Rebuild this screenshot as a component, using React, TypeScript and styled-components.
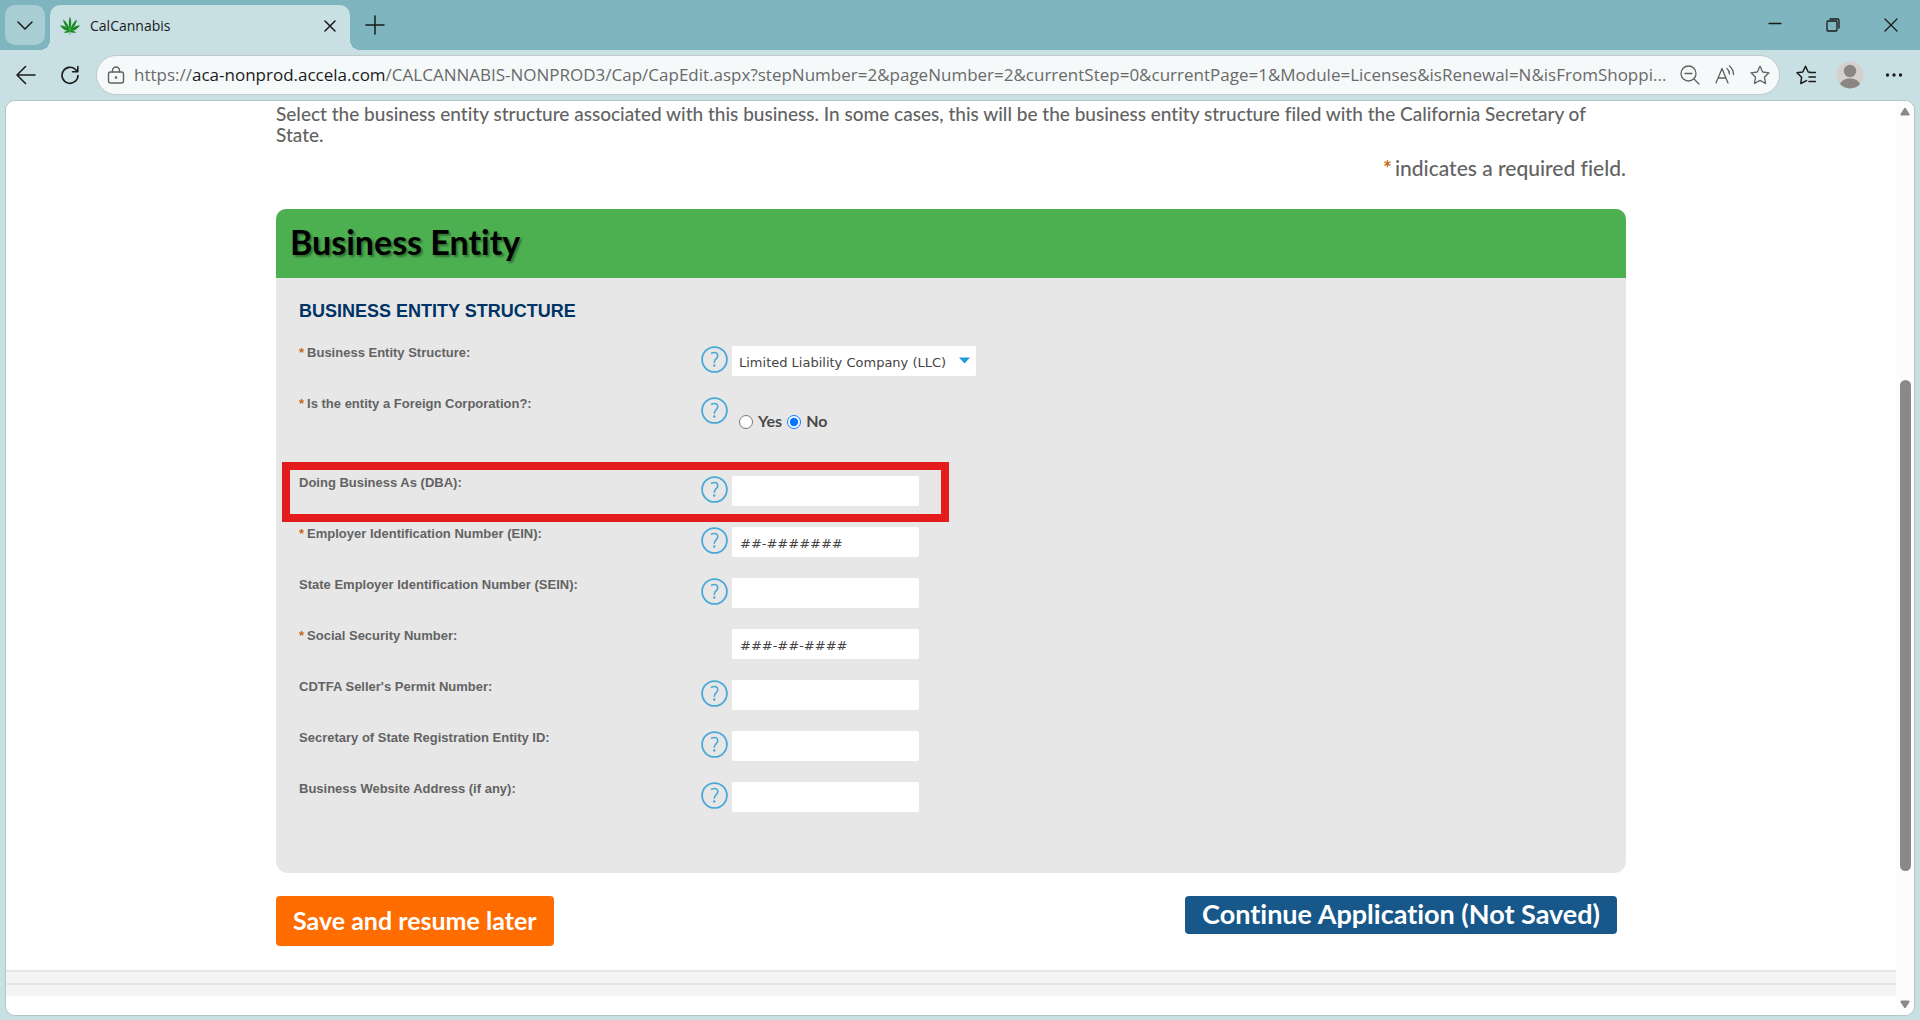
import React, { useState } from "react";
import styled, { createGlobalStyle, css } from "styled-components";

const sans = `Lato, "Open Sans", sans-serif`;
const ui = `"Open Sans", "Noto Sans", sans-serif`;
const arial = `"Liberation Sans", Arial, sans-serif`;
const verdana = `"DejaVu Sans", Verdana, sans-serif`;

const GlobalStyle = createGlobalStyle`
  *, *::before, *::after { box-sizing: border-box; }
  body { margin: 0; font-family: ${sans}; font-variant-ligatures: none; color: #636363; }
  button, input, select { font: inherit; font-variant-ligatures: inherit; color: inherit; }
`;

/* ---------- Browser frame ---------- */

const Window = styled.div`
  display: flex;
  flex-direction: column;
  height: 100vh;
  overflow: hidden;
  background: #c8dfe3;
`;

const TabStrip = styled.header`
  display: flex;
  align-items: flex-start;
  height: 50px;
  padding-left: 5px;
  background: #7eb5be;
  flex: none;
`;

const IconButton = styled.button<{ $w?: number; $h?: number }>`
  display: flex;
  align-items: center;
  justify-content: center;
  flex: none;
  width: ${(p) => p.$w ?? 44}px;
  height: ${(p) => p.$h ?? 38}px;
  padding: 0;
  border: 0;
  background: none;
  color: #1b1b1b;
`;

const TabMenuButton = styled(IconButton)`
  margin: 5px 5px 0 0;
  border-radius: 10px;
  background: #a8ced4;
`;

const Tab = styled.div`
  position: relative;
  display: flex;
  align-items: center;
  align-self: flex-end;
  width: 300px;
  height: 45px;
  padding: 0 4px 4px 8px;
  border-radius: 10px 10px 0 0;
  background: #c8dfe3;
  font-family: ${ui};
  font-size: 14px;
  color: #1b1b1b;

  &::before,
  &::after {
    content: "";
    position: absolute;
    bottom: 0;
    width: 10px;
    height: 10px;
  }
  &::before {
    left: -10px;
    background: radial-gradient(circle at 0 0, transparent 10px, #c8dfe3 10px);
  }
  &::after {
    right: -10px;
    background: radial-gradient(circle at 100% 0, transparent 10px, #c8dfe3 10px);
  }
`;

const TabTitle = styled.span`
  flex: 1;
  padding-left: 8px;
`;

const WindowControls = styled.div`
  display: flex;
  margin-left: auto;
`;

const Toolbar = styled.nav`
  display: flex;
  align-items: center;
  height: 50px;
  padding: 0 4px;
  flex: none;
`;

const AddressBar = styled.div`
  display: flex;
  align-items: center;
  flex: 1;
  min-width: 0;
  height: 40px;
  margin: 0 4px;
  padding-right: 2px;
  border: 1px solid #c0caca;
  border-radius: 20px;
  background: #f5f9fa;

  ${IconButton} { color: #616161; }
`;

const Url = styled.div`
  flex: 1;
  min-width: 0;
  overflow: hidden;
  white-space: nowrap;
  font-family: ${ui};
  font-size: 17px;
  line-height: 26px;
  color: #6a6a68;
  outline: none;
`;

const Host = styled.span`
  color: #1b1b1b;
`;

/* ---------- Page ---------- */

const Page = styled.div`
  display: flex;
  flex: 1;
  min-height: 0;
  margin: 0 5px 4px;
  border: 1px solid #b3c5c9;
  border-radius: 10px;
  overflow: hidden;
  background: #fff;
`;

const Viewport = styled.main`
  flex: 1;
  min-width: 0;
  overflow: hidden;
`;

const Content = styled.div`
  max-width: 1350px;
  margin: 0 auto;
`;

const Intro = styled.p`
  margin: 0;
  padding: 2px 20px 0 0;
  font-size: 19px;
  font-weight: 500;
  line-height: 21px;
`;

const RequiredNote = styled.p`
  margin: 11px 0 29px;
  font-size: 21px;
  font-weight: 500;
  line-height: 24px;
  text-align: right;
`;

const Star = styled.span`
  margin-right: 3px;
  color: #c76a14;
  font-weight: 700;
`;

const Panel = styled.section`
  border-radius: 10px 10px 12px 12px;
  overflow: hidden;
  background: #e7e7e7;
`;

const PanelTitle = styled.h1`
  margin: 0;
  padding: 13px 14px 16px;
  background: #4caf50;
  color: #000;
  font-size: 34px;
  font-weight: 700;
  line-height: 40px;
  text-shadow: 2px 2px 2px rgba(0, 0, 0, 0.35);
`;

const PanelBody = styled.form`
  padding: 22px 23px 42px;
`;

const SectionTitle = styled.h2`
  margin: 0 0 22px;
  font-family: ${arial};
  font-size: 18px;
  line-height: 22px;
  color: #003366;
`;

const Row = styled.div<{ $tall?: boolean }>`
  position: relative;
  display: grid;
  grid-template-columns: 402px 31px 1fr;
  align-items: start;
  height: ${(p) => (p.$tall ? 79 : 51)}px;
`;

const Highlight = styled.div`
  position: absolute;
  top: -12px;
  left: -17px;
  width: 667px;
  height: 60px;
  border: 8px solid #e51c1e;
  pointer-events: none;
`;

const labelText = css`
  font-family: ${arial};
  font-size: 13px;
  font-weight: 700;
  line-height: 18px;
`;

const Label = styled.label`
  ${labelText}
`;

const LabelText = styled.span`
  ${labelText}
`;

const HelpButton = styled.button`
  display: block;
  grid-column: 2;
  width: 27px;
  height: 27px;
  margin-top: 2px;
  padding: 0;
  border: 0;
  background: none;
  color: #4ba9d8;
`;

const fieldBox = css`
  grid-column: 3;
  height: 30px;
  margin-top: 2px;
  border: 0;
  border-radius: 2px;
  background: #fff;
  font-family: ${verdana};
  font-size: 13px;
  color: #444;
`;

const TextInput = styled.input`
  ${fieldBox}
  width: 187px;
  padding: 2px 8px 0;
  &::placeholder { color: #444; opacity: 1; }
`;

const SelectWrap = styled.div`
  ${fieldBox}
  position: relative;
  width: 244px;
`;

const Select = styled.select`
  appearance: none;
  width: 100%;
  height: 100%;
  padding: 2px 18px 0 7px;
  border: 0;
  background: transparent;
`;

const Caret = styled.svg`
  position: absolute;
  top: 11px;
  right: 6px;
  pointer-events: none;
`;

const Choices = styled.fieldset`
  display: flex;
  align-items: center;
  grid-column: 3;
  margin: 16px 0 0;
  padding: 0 0 0 7px;
  border: 0;
`;

const Choice = styled.label`
  display: flex;
  align-items: center;
  margin-right: 5px;
  font-size: 16px;
  font-weight: 700;
  line-height: 20px;
  color: #4a4a4a;
`;

const Radio = styled.input`
  width: 14px;
  height: 14px;
  margin: 1px 5px 0 0;
  accent-color: #0a75ff;
`;

const Actions = styled.div`
  display: flex;
  align-items: flex-start;
  justify-content: space-between;
  padding: 23px 9px 24px 0;
`;

const ActionButton = styled.button<{ $primary?: boolean }>`
  height: ${(p) => (p.$primary ? 38 : 50)}px;
  padding: 0 17px 2px;
  border: 0;
  border-radius: 4px;
  background: ${(p) => (p.$primary ? "#17578a" : "#ff6c00")};
  color: #fff;
  font-size: ${(p) => (p.$primary ? 27 : 25)}px;
  font-weight: 700;
  line-height: 30px;
  white-space: nowrap;
`;

const Footer = styled.footer`
  border-top: 2px solid #e6e6e6;
  background: #f4f4f4;
`;

const FooterBand = styled.div`
  height: 11px;
  &:first-child { height: 13px; border-bottom: 2px solid #e6e6e6; }
`;

const ScrollTrack = styled.div`
  display: flex;
  flex-direction: column;
  align-items: center;
  flex: none;
  width: 18px;
  padding: 6px 0;
  background: #fcfcfc;
`;

const ScrollRail = styled.div`
  flex: 1;
  width: 11px;
  padding: 264px 0 129px;
`;

const ScrollThumb = styled.div`
  height: 100%;
  border-radius: 6px;
  background: #898989;
`;

/* ---------- Icons ---------- */

const Svg = ({ size = 20, children, sw = 1.3 }: { size?: number; sw?: number; children: React.ReactNode }) => (
  <svg width={size} height={size} viewBox={`0 0 ${size} ${size}`} fill="none" stroke="currentColor" strokeWidth={sw} strokeLinecap="round" strokeLinejoin="round" aria-hidden="true">
    {children}
  </svg>
);

const starPath = "M10 1.2l2.7 5.8 6.3.8-4.6 4.4 1.2 6.3L10 15.4l-5.6 3.1 1.2-6.3L1 7.8 7.3 7z";

const Leaf = () => (
  <svg width="20" height="20" viewBox="0 0 20 20" fill="#188a22" aria-hidden="true">
    <path d="M10 0.500C11.500 4 11.700 9 10 15 8.300 9 8.500 4 10 0.500Z" />
    <path d="M3 3.500C6.500 6 9 9.500 10 15 6 12 3.800 8 3 3.500Z" />
    <path d="M17 3.500C13.500 6 11 9.500 10 15 14 12 16.200 8 17 3.500Z" />
    <path d="M0 9.500C4 9.500 8 11.500 10 15.200 6 15.300 2.500 13 0 9.500Z" />
    <path d="M20 9.500C16 9.500 12 11.500 10 15.200 14 15.300 17.500 13 20 9.500Z" />
    <path d="M3.500 16.300C6 14.800 8.500 14.600 10 15.200 8.500 17 6 17.300 3.500 16.300Z" />
    <path d="M16.500 16.300C14 14.800 11.500 14.600 10 15.200 11.500 17 14 17.300 16.500 16.300Z" />
    <path d="M9.700 14h0.700v4.500h-0.700z" />
  </svg>
);

const Help = ({ about }: { about: string }) => (
  <HelpButton type="button" aria-label={`Help: ${about}`}>
    <svg width="27" height="27" viewBox="0 0 27 27" fill="none" stroke="currentColor" strokeWidth="1.800" strokeLinecap="round" aria-hidden="true">
      <circle cx="13.500" cy="13.500" r="12.400" />
      <path d="M10.700 7.100c3.500-1.500 6.200-.2 6.100 2.500-.1 2.900-3.300 3.200-3.500 6.700" strokeWidth="1.600" />
      <circle cx="13.200" cy="19.500" r="1.200" fill="currentColor" stroke="none" />
    </svg>
  </HelpButton>
);

/* ---------- Form rows ---------- */

type Field = { id: string; label: string; required?: boolean; help?: boolean; placeholder?: string; marked?: boolean };

const fields: Field[] = [
  { id: "dba", label: "Doing Business As (DBA):", help: true, marked: true },
  { id: "ein", label: "Employer Identification Number (EIN):", required: true, help: true, placeholder: "##-#######" },
  { id: "sein", label: "State Employer Identification Number (SEIN):", help: true },
  { id: "ssn", label: "Social Security Number:", required: true, placeholder: "###-##-####" },
  { id: "cdtfa", label: "CDTFA Seller's Permit Number:", help: true },
  { id: "sos", label: "Secretary of State Registration Entity ID:", help: true },
  { id: "site", label: "Business Website Address (if any):", help: true },
];

const FieldRow = ({ field }: { field: Field }) => (
  <Row>
    <Label htmlFor={field.id}>
      {field.required && <Star>*</Star>}
      {field.label}
    </Label>
    {field.help && <Help about={field.label} />}
    <TextInput id={field.id} type="text" placeholder={field.placeholder} />
    {field.marked && <Highlight />}
  </Row>
);

export default function App() {
  const [foreign, setForeign] = useState("No");

  return (
    <Window>
      <GlobalStyle />
      <TabStrip>
        <TabMenuButton $w={40} $h={40} aria-label="Tab actions">
          <Svg size={16} sw={1.5}><path d="M1 5l7 7 7-7" /></Svg>
        </TabMenuButton>
        <Tab>
          <IconButton as="span" $w={24} $h={24}><Leaf /></IconButton>
          <TabTitle>CalCannabis</TabTitle>
          <IconButton $w={32} $h={32} aria-label="Close tab">
            <Svg size={12} sw={1.5}><path d="M1 1l10 10M11 1L1 11" /></Svg>
          </IconButton>
        </Tab>
        <IconButton $w={50} $h={50} aria-label="New tab">
          <Svg sw={1.5}><path d="M10 1v18M1 10h18" /></Svg>
        </IconButton>
        <WindowControls>
          <IconButton $w={58} $h={48} aria-label="Minimize">
            <Svg size={14}><path d="M1 6.500h12" /></Svg>
          </IconButton>
          <IconButton $w={58} $h={50} aria-label="Restore">
            <Svg size={14}><rect x="1" y="3" width="10" height="10" rx="1" /><path d="M4 1h7.500a1.500 1.500 0 0 1 1.500 1.500V10" /></Svg>
          </IconButton>
          <IconButton $w={58} $h={50} aria-label="Close">
            <Svg size={14}><path d="M1 1l12 12M13 1L1 13" /></Svg>
          </IconButton>
        </WindowControls>
      </TabStrip>

      <Toolbar>
        <IconButton aria-label="Back">
          <Svg sw={1.5}><path d="M19 10H1.500M9.500 1.500L1 10l8.500 8.500" /></Svg>
        </IconButton>
        <IconButton aria-label="Refresh">
          <Svg sw={1.6}><path d="M18 10.500A8 8 0 1 1 15.500 4.500L17.500 6.500M17.800 1.500v5.200h-5.200" /></Svg>
        </IconButton>
        <AddressBar>
          <IconButton $w={37} as="span">
            <Svg size={18} sw={1.4}>
              <rect x="1.500" y="6" width="15" height="11" rx="2" />
              <path d="M5.500 6V4.500a3.500 3.500 0 0 1 7 0V6" />
              <circle cx="9" cy="11.500" r="0.600" fill="currentColor" />
            </Svg>
          </IconButton>
          <Url role="textbox" aria-label="Address" tabIndex={0}>
            https://<Host>aca-nonprod.accela.com</Host>
            /CALCANNABIS-NONPROD3/Cap/CapEdit.aspx?stepNumber=2&amp;pageNumber=2&amp;currentStep=0&amp;currentPage=1&amp;Module=Licenses&amp;isRenewal=N&amp;isFromShoppi...
          </Url>
          <IconButton $w={35} aria-label="Zoom out">
            <Svg><circle cx="8.500" cy="8.500" r="7.500" /><path d="M5 8.500h7M14 14l5 5" /></Svg>
          </IconButton>
          <IconButton $w={35} aria-label="Read aloud">
            <Svg><path d="M1 18L7 3.500 13 18M3.200 13h7.600M12 3.500c1.600 1.400 2.400 3.300 2.400 5.500M14.500 1c2.600 2.200 4 5.200 4 8.600" /></Svg>
          </IconButton>
          <IconButton $w={35} aria-label="Add to favorites">
            <Svg><path d={starPath} /></Svg>
          </IconButton>
        </AddressBar>
        <IconButton aria-label="Favorites">
          <Svg sw={1.500}><path d="M10.500 15.600L4.800 18.500 5.600 12.200 1 7.800l5.800-.8L9.500 1.200 12.200 7l2.300.3M13 7.500h6.500M13 12h6.500M13 16.500h6.500" /></Svg>
        </IconButton>
        <IconButton aria-label="Profile">
          <svg width="28" height="28" viewBox="0 0 28 28" aria-hidden="true">
            <circle cx="14" cy="14" r="13.500" fill="#d4d0cd" />
            <circle cx="14" cy="10" r="6.200" fill="#8a8683" />
            <path d="M4 23c2-4 5.500-5.500 10-5.500S22 19 24 23a13.500 13.500 0 0 1-20 0z" fill="#8a8683" />
          </svg>
        </IconButton>
        <IconButton aria-label="Settings and more">
          <Svg><g fill="currentColor" stroke="none"><circle cx="3.500" cy="10" r="1.700" /><circle cx="10" cy="10" r="1.700" /><circle cx="16.500" cy="10" r="1.700" /></g></Svg>
        </IconButton>
      </Toolbar>

      <Page>
        <Viewport>
          <Content>
            <Intro>
              Select the business entity structure associated with this business. In some cases, this will be the business entity structure filed with the California Secretary of State.
            </Intro>
            <RequiredNote><Star>*</Star>indicates a required field.</RequiredNote>

            <Panel>
              <PanelTitle>Business Entity</PanelTitle>
              <PanelBody onSubmit={(e) => e.preventDefault()}>
                <SectionTitle>BUSINESS ENTITY STRUCTURE</SectionTitle>
                <Row>
                  <Label htmlFor="structure"><Star>*</Star>Business Entity Structure:</Label>
                  <Help about="Business Entity Structure" />
                  <SelectWrap>
                    <Select id="structure" defaultValue="llc">
                      <option value="llc">Limited Liability Company (LLC)</option>
                    </Select>
                    <Caret width="11" height="7" viewBox="0 0 11 7" aria-hidden="true">
                      <path d="M0 0.500h11L5.500 6.500z" fill="#1f9bd7" />
                    </Caret>
                  </SelectWrap>
                </Row>
                <Row $tall>
                  <LabelText id="foreign-label"><Star>*</Star>Is the entity a Foreign Corporation?:</LabelText>
                  <Help about="Is the entity a Foreign Corporation?" />
                  <Choices aria-labelledby="foreign-label">
                    {["Yes", "No"].map((v) => (
                      <Choice key={v}>
                        <Radio type="radio" name="foreign" value={v} checked={foreign === v} onChange={() => setForeign(v)} />
                        {v}
                      </Choice>
                    ))}
                  </Choices>
                </Row>
                {fields.map((f) => <FieldRow key={f.id} field={f} />)}
              </PanelBody>
            </Panel>

            <Actions>
              <ActionButton type="button">Save and resume later</ActionButton>
              <ActionButton type="button" $primary>Continue Application (Not Saved)</ActionButton>
            </Actions>
          </Content>
          <Footer>
            <FooterBand />
            <FooterBand />
          </Footer>
        </Viewport>
        <ScrollTrack aria-hidden="true">
          <svg width="10" height="9" viewBox="0 0 10 9"><path d="M4 1.500Q5 0 6 1.500L9.500 7Q10 8.500 8.500 8.500H1.500Q0 8.500 .5 7z" fill="#898989" /></svg>
          <ScrollRail><ScrollThumb /></ScrollRail>
          <svg width="10" height="9" viewBox="0 0 10 9"><path d="M4 7.500Q5 9 6 7.500L9.500 2Q10 .5 8.500 .5H1.500Q0 .5 .5 2z" fill="#898989" /></svg>
        </ScrollTrack>
      </Page>
    </Window>
  );
}
